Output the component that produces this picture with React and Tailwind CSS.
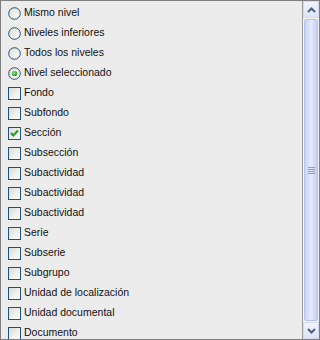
import React from "react";

const radios = ["Mismo nivel", "Niveles inferiores", "Todos los niveles", "Nivel seleccionado"];
const checks = [
  "Fondo",
  "Subfondo",
  "Sección",
  "Subsección",
  "Subactividad",
  "Subactividad",
  "Subactividad",
  "Serie",
  "Subserie",
  "Subgrupo",
  "Unidad de localización",
  "Unidad documental",
  "Documento",
];

function Radio({ on }) {
  return (
    <svg width="13" height="13" viewBox="0 0 13 13" className="shrink-0">
      <defs>
        <linearGradient id="rg" x1="0" y1="0" x2="1" y2="1">
          <stop offset="0" stopColor="#dcdcd4" />
          <stop offset="1" stopColor="#ffffff" />
        </linearGradient>
        <radialGradient id="dot" cx="0.4" cy="0.4" r="0.6">
          <stop offset="0" stopColor="#8ee28e" />
          <stop offset="1" stopColor="#1f9a1f" />
        </radialGradient>
      </defs>
      <circle cx="6.5" cy="6.5" r="5.8" fill="url(#rg)" stroke="#1c5180" strokeWidth="1" />
      {on && <circle cx="6.5" cy="6.5" r="2.6" fill="url(#dot)" />}
    </svg>
  );
}

function Check({ on }) {
  return (
    <div className="w-[13px] h-[13px] shrink-0 border border-[#1c5180] bg-gradient-to-br from-[#dcdcd7] to-white flex items-center justify-center">
      {on && (
        <svg width="11" height="11" viewBox="0 0 11 11">
          <path d="M2 5 L4.3 7.5 L9 2.5" fill="none" stroke="#21a121" strokeWidth="2.2" />
        </svg>
      )}
    </div>
  );
}

export default function App() {
  return (
    <div
      className="w-[320px] h-[340px] border border-[#7f7f7f] bg-[#ececec] flex overflow-hidden"
      style={{ fontFamily: "'Liberation Sans', Arial, sans-serif" }}
    >
      <div className="flex-1 flex flex-col pt-[2px] pl-[7px] border-r border-[#9a9a9a] overflow-hidden">
        {radios.map((r, i) => (
          <div key={i} className="h-[20px] shrink-0 flex items-center gap-[3px] text-[10.5px] text-[#111]">
            <Radio on={i === 3} />
            <span className="whitespace-nowrap">{r}</span>
          </div>
        ))}
        {checks.map((c, i) => (
          <div key={i} className="h-[20px] shrink-0 flex items-center gap-[3px] text-[10.5px] text-[#111]">
            <Check on={c === "Sección"} />
            <span className="whitespace-nowrap">{c}</span>
          </div>
        ))}
      </div>
      <div className="w-[16px] flex flex-col bg-[#f4f4f0]">
        <div className="h-[17px] border border-[#d6dcf0] bg-gradient-to-b from-[#f3f5fc] to-[#dde3f6] flex items-center justify-center">
          <svg width="9" height="6" viewBox="0 0 9 6">
            <path d="M1 5 L4.5 1.5 L8 5" fill="none" stroke="#4d6185" strokeWidth="2" />
          </svg>
        </div>
        <div className="flex-1 mx-[1px] my-[1px] rounded-[2px] border border-[#b8c4ec] bg-gradient-to-r from-[#c9d3f5] via-[#e6ebfc] to-[#c4cef2] flex items-center justify-center">
          <div className="flex flex-col gap-[1px]">
            <div className="w-[7px] h-[1px] bg-[#8c9bcc]" />
            <div className="w-[7px] h-[1px] bg-[#8c9bcc]" />
            <div className="w-[7px] h-[1px] bg-[#8c9bcc]" />
            <div className="w-[7px] h-[1px] bg-[#8c9bcc]" />
          </div>
        </div>
        <div className="h-[17px] border border-[#d6dcf0] bg-gradient-to-b from-[#f3f5fc] to-[#dde3f6] flex items-center justify-center">
          <svg width="9" height="6" viewBox="0 0 9 6">
            <path d="M1 1 L4.5 4.5 L8 1" fill="none" stroke="#4d6185" strokeWidth="2" />
          </svg>
        </div>
      </div>
    </div>
  );
}
